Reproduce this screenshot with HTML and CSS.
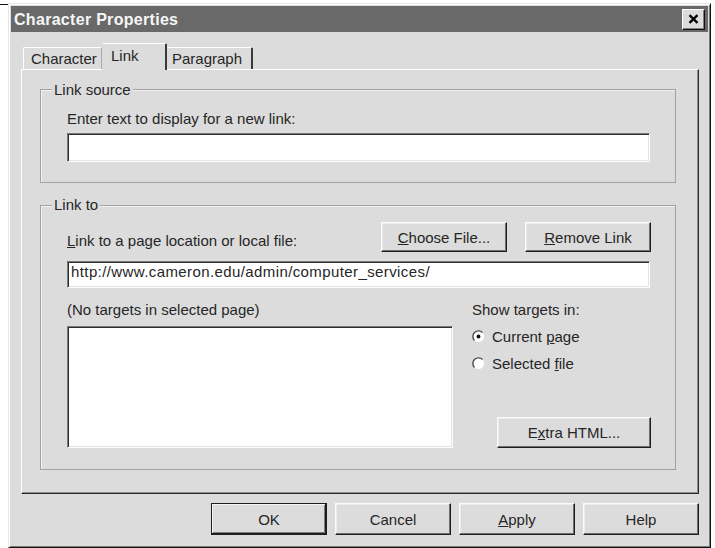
FILE: index.html
```html
<!DOCTYPE html>
<html lang="en">
<head>
<meta charset="utf-8">
<title>Character Properties</title>
<link rel="stylesheet" href="styles.css">
</head>
<body>
  <div class="edge"></div>
  <div class="dialog">
    <div class="titlebar">
      <span class="title">Character Properties</span>
      <button class="close" aria-label="Close">
        <svg width="11" height="10" viewBox="0 0 11 10"><path d="M1.5 1.2 L9.5 8.8 M9.5 1.2 L1.5 8.8" stroke="#000" stroke-width="2.3" fill="none"/></svg>
      </button>
    </div>

    <div class="content">
      <div class="tabs">
        <div class="tab tab-character">Character</div>
        <div class="tab tab-link active">Link</div>
        <div class="tab tab-paragraph">Paragraph</div>
      </div>

      <div class="panel">
        <section class="group group-source">
          <div class="legend">Link source</div>
          <div class="label">Enter text to display for a new link:</div>
          <div class="field field-text"></div>
        </section>

        <section class="group group-target">
          <div class="legend">Link to</div>
          <div class="row-location">
            <div class="label label-location"><u>L</u>ink to a page location or local file:</div>
            <div class="row-buttons">
              <button class="btn btn-wide"><u>C</u>hoose File...</button>
              <button class="btn btn-wide"><u>R</u>emove Link</button>
            </div>
          </div>
          <div class="field field-url">http://www.cameron.edu/admin/computer_services/</div>
          <div class="targets">
            <div class="targets-list">
              <div class="label">(No targets in selected page)</div>
              <div class="field listbox"></div>
            </div>
            <div class="targets-options">
              <div class="label">Show targets in:</div>
              <div class="radio radio-first">
                <svg width="13" height="13" viewBox="0 0 13 13">
                  <circle cx="6.5" cy="6.5" r="5.6" fill="#fff"/>
                  <path d="M2.5 10.5 A5.6 5.6 0 0 1 10.5 2.5" stroke="#4a4a4a" stroke-width="1.4" fill="none"/>
                  <circle cx="6.5" cy="6.5" r="1.9" fill="#111"/>
                </svg>
                <span>Current <u>p</u>age</span>
              </div>
              <div class="radio">
                <svg width="13" height="13" viewBox="0 0 13 13">
                  <circle cx="6.5" cy="6.5" r="5.6" fill="#fff"/>
                  <path d="M2.5 10.5 A5.6 5.6 0 0 1 10.5 2.5" stroke="#4a4a4a" stroke-width="1.4" fill="none"/>
                </svg>
                <span>Selected <u>f</u>ile</span>
              </div>
              <button class="btn btn-extra">E<u>x</u>tra HTML...</button>
            </div>
          </div>
        </section>
      </div>

      <div class="actions">
        <button class="btn btn-action btn-default">OK</button>
        <button class="btn btn-action">Cancel</button>
        <button class="btn btn-action"><u>A</u>pply</button>
        <button class="btn btn-action">Help</button>
      </div>
    </div>
  </div>
</body>
</html>
```

FILE: styles.css
```css
* {
  box-sizing: border-box;
}

html,
body {
  margin: 0;
  background: #fff;
}

body {
  width: 715px;
  height: 548px;
  overflow: hidden;
  display: flex;
  align-items: flex-start;
  font: 15px/17px "Liberation Sans", Arial, sans-serif;
  color: #262626;
}

/* edge of the window lying behind the dialog */
.edge {
  width: 8px;
  height: 0;
  margin-top: 4px;
  border-top: 1px solid #111;
}

u {
  text-decoration: underline;
  text-underline-offset: 1px;
}

/* ---- dialog frame ---- */
.dialog {
  width: 703px;
  height: 545px;
  margin-top: 3px;
  padding: 2px;
  display: flex;
  flex-direction: column;
  background: #dcdcdc;
  border: 1px solid;
  border-color: #e6e6e6 #111 #111 #e6e6e6;
  box-shadow: inset 1px 1px 0 #fff, inset -1px -1px 0 #7c7c7c;
}

.titlebar {
  height: 26px;
  flex: none;
  display: flex;
  align-items: center;
  justify-content: space-between;
  padding: 0 3px 0 3px;
  background: #696969;
}

.title {
  font-weight: bold;
  font-size: 16px;
  letter-spacing: 0.3px;
  color: #f6f6f6;
}

.close {
  width: 23px;
  height: 21px;
  padding: 0;
  display: flex;
  align-items: center;
  justify-content: center;
  background: #dcdcdc;
  border: 1px solid;
  border-color: #fff #111 #111 #fff;
  box-shadow: inset -1px -1px 0 #808080;
}

.content {
  flex: 1;
  display: flex;
  flex-direction: column;
  padding: 11px 9px 10px 10px;
}

/* ---- tabs ---- */
.tabs {
  height: 26px;
  flex: none;
  display: flex;
  align-items: flex-end;
  padding-left: 2px;
  position: relative;
  z-index: 1;
}

.tab {
  height: 22px;
  padding: 2px 0 0 7px;
  background: #dcdcdc;
  border-top: 1px solid #fff;
  border-left: 1px solid #fff;
  border-right: 1px solid #a8a8a8;
  border-radius: 2px 2px 0 0;
  white-space: nowrap;
}

.tab-character {
  width: 79px;
}

.tab-link {
  width: 65px;
  height: 27px;
  margin-bottom: -1px;
  padding: 3px 0 0 8px;
  border-left-color: #dcdcdc;
  border-right: 2px solid #3a3a3a;
}

.tab-paragraph {
  width: 86px;
  padding-left: 5px;
  border-left: none;
  border-right: 2px solid #3a3a3a;
}

/* ---- tab page ---- */
.panel {
  flex: 1;
  display: flex;
  flex-direction: column;
  padding: 19px 22px 0 18px;
  border: 1px solid;
  border-color: #fff #2a2a2a #2a2a2a #fff;
  box-shadow: inset -1px -1px 0 #8c8c8c;
}

.group {
  display: flex;
  flex-direction: column;
  padding: 0 25px 20px 26px;
  border: 1px solid #a2a2a2;
  box-shadow: inset 1px 1px 0 #f2f2f2;
}

/* caption sitting on the top edge of the frame */
.legend {
  align-self: flex-start;
  margin: -9px 0 0 -15px;
  padding: 0 2px;
  background: #dcdcdc;
}

.group-source .label {
  margin-top: 12px;
}

.field {
  background: #fff;
  border: 1px solid;
  border-color: #7a7a7a #fff #fff #7a7a7a;
  box-shadow: inset 1px 1px 0 #2e2e2e, inset -1px -1px 0 #e2e2e2;
}

.field-text {
  height: 29px;
  margin-top: 6px;
}

.group-target {
  margin-top: 22px;
  padding-bottom: 21px;
}

.group-target .legend {
  margin-top: -10px;
}

.row-location {
  margin-top: 9px;
  display: flex;
  align-items: flex-end;
  justify-content: space-between;
}

.label-location {
  margin-bottom: 3px;
}

.row-buttons {
  display: flex;
  gap: 18px;
  margin-right: -1px;
}

.field-url {
  height: 27px;
  margin-top: 9px;
  padding: 1px 3px 0;
  letter-spacing: 0.4px;
  white-space: nowrap;
}

.targets {
  margin-top: 13px;
  display: grid;
  grid-template-columns: 386px 1fr;
  column-gap: 19px;
}

.targets-list {
  display: flex;
  flex-direction: column;
}

.listbox {
  height: 122px;
  margin-top: 8px;
}

.targets-options {
  display: flex;
  flex-direction: column;
}

.radio {
  margin-top: 10px;
  display: flex;
  align-items: center;
  gap: 7px;
}

.radio svg {
  flex: none;
}

/* ---- buttons ---- */
.btn {
  padding: 0;
  font: inherit;
  color: inherit;
  background: #dcdcdc;
  border: 1px solid;
  border-color: #fbfbfb #1e1e1e #1e1e1e #fbfbfb;
  box-shadow: inset -1px -1px 0 #6e6e6e, inset 1px 1px 0 #ececec;
  white-space: nowrap;
}

.btn-wide {
  width: 126px;
  height: 30px;
}

.btn-extra {
  width: 154px;
  height: 31px;
  margin-top: auto;
  margin-right: -1px;
  align-self: flex-end;
}

.actions {
  flex: none;
  margin-top: 9px;
  display: flex;
  justify-content: flex-end;
  gap: 8px;
}

.btn-action {
  width: 116px;
  height: 32px;
}

.btn-default {
  border-color: #1e1e1e;
  box-shadow: inset -1px -1px 0 #1e1e1e, inset 1px 1px 0 #f4f4f4, inset -2px -2px 0 #7a7a7a;
}
```
